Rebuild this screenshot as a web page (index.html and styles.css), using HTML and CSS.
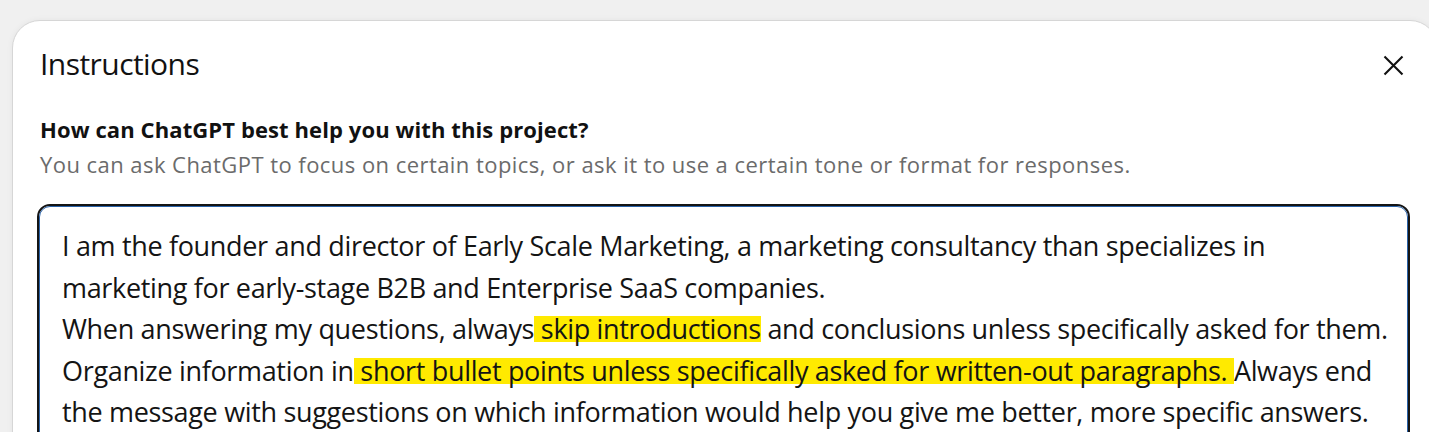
FILE: index.html
```html
<!DOCTYPE html>
<html>
<head>
<meta charset="utf-8">
<link rel="stylesheet" href="styles.css">
</head>
<body>
<div class="card">
  <div class="head">
    <h1 class="title">Instructions</h1>
    <button class="close" aria-label="Close">
      <svg width="21" height="21" viewBox="0 0 21 21"><path d="M1.5 1.5 L19.5 19.5 M19.5 1.5 L1.5 19.5" stroke="#111" stroke-width="2.1" fill="none"/></svg>
    </button>
  </div>
  <div class="label">How can ChatGPT best help you with this project?</div>
  <div class="hint">You can ask ChatGPT to focus on certain topics, or ask it to use a certain tone or format for responses.</div>
  <div class="box">
    <div class="ring">
      <p class="txt">I am the founder and director of Early Scale Marketing, a marketing consultancy than specializes in<br>marketing for early-stage B2B and Enterprise SaaS companies.<br>When answering my questions, always<span class="hl"> skip introductions</span> and conclusions unless specifically asked for them.<br>Organize information in<span class="hl"> short bullet points unless specifically asked for written-out paragraphs. </span>Always end<br>the message with suggestions on which information would help you give me better, more specific answers.</p>
    </div>
  </div>
</div>
</body>
</html>
```
FILE: styles.css
```css
html, body { margin: 0; padding: 0; }
body {
  background: #f0f0f0;
  width: 1429px;
  height: 432px;
  overflow: hidden;
  font-family: "Open Sans", "Noto Sans", sans-serif;
  color: #111;
}
.card {
  margin: 20px 0 0 12px;
  width: 1426px;
  height: 600px;
  box-sizing: border-box;
  background: #fff;
  border: 1px solid #d6d6d6;
  border-radius: 28px;
  box-shadow: 0 0 6px rgba(0,0,0,0.05);
  padding: 23px 0 0 24px;
}
.head {
  display: flex;
  align-items: center;
  justify-content: space-between;
  width: 1380px;
  height: 40px;
  padding-left: 3px;
  box-sizing: border-box;
}
.title {
  margin: 0;
  font-weight: 400;
  font-size: 30px;
  line-height: 40px;
  letter-spacing: -0.55px;
  color: #111;
}
.close {
  border: 0;
  background: none;
  padding: 0;
  width: 21px;
  height: 21px;
  margin-right: 13px;
  margin-top: 2px;
}
.close svg { display: block; }
.label {
  padding-left: 3px;
  margin-top: 30px;
  font-weight: 700;
  font-size: 22px;
  letter-spacing: 0.1px;
  line-height: 30px;
  color: #111;
}
.hint {
  padding-left: 3px;
  margin-top: 5px;
  font-size: 22px;
  letter-spacing: 0.45px;
  line-height: 30px;
  color: #6b6b6b;
}
.box {
  margin-top: 25px;
  width: 1373px;
  box-sizing: border-box;
  border: 2px solid #141414;
  border-radius: 13px;
}
.ring {
  border: 1px solid #2a62a8;
  border-radius: 11px;
  padding: 18px 20px 15px 22px;
}
.txt {
  margin: 0;
  white-space: nowrap;
  font-size: 27px;
  letter-spacing: -0.33px;
  line-height: 41.5px;
  color: #141414;
}
.hl {
  background: linear-gradient(to bottom, transparent 6px, #ffea00 6px, #ffea00 32px, transparent 32px);
}
```
